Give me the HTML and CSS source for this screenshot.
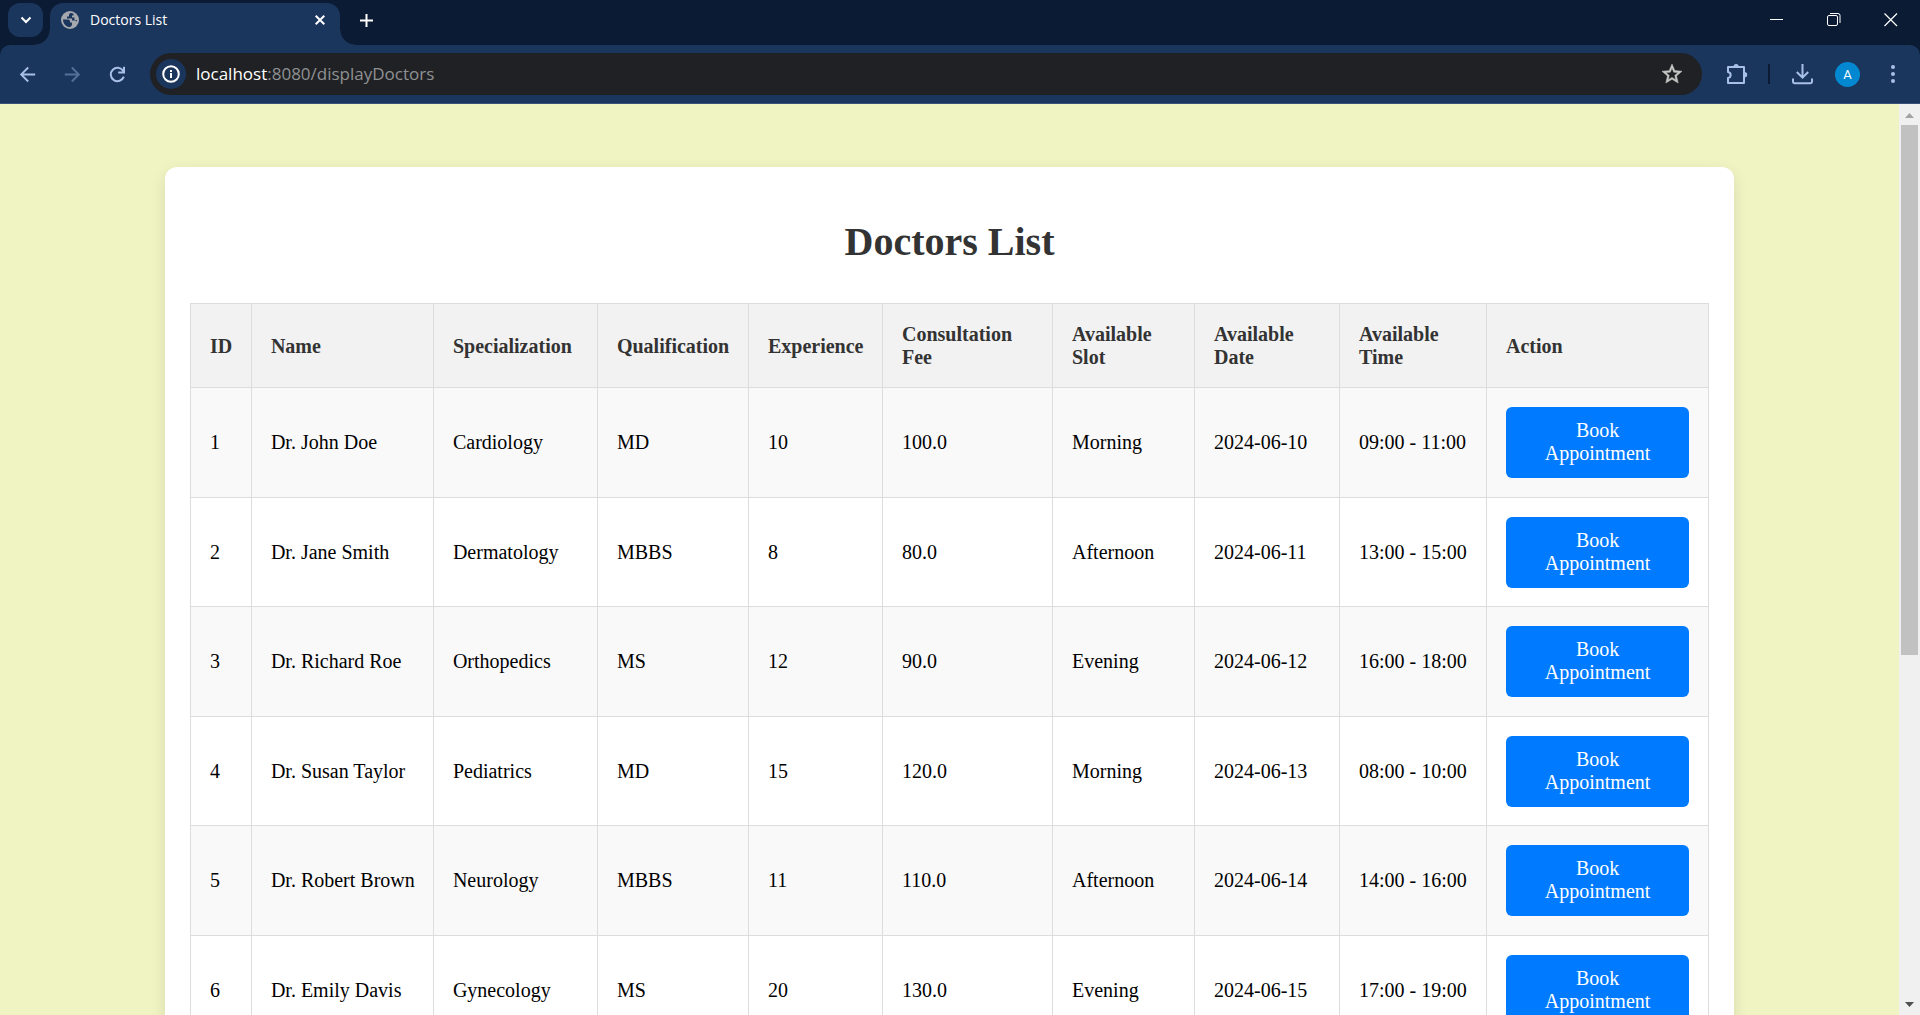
FILE: index.html
```html
<!DOCTYPE html>
<html lang="en">
<head>
<meta charset="utf-8">
<title>Doctors List</title>
<link rel="stylesheet" href="styles.css">
</head>
<body>
<div class="browser">
  <header class="tabstrip">
    <button class="tab-search" aria-label="Search tabs">
      <svg width="12" height="8" viewBox="0 0 12 8" fill="none" stroke="#fff" stroke-width="2"><path d="M1.500 1.500 6 6l4.500-4.500"/></svg>
    </button>
    <div class="tab">
      <svg width="18" height="18" viewBox="0 0 18 18"><circle cx="9" cy="9" r="9" fill="#a5a8ad"/><path fill="#1b365d" d="M2 8.500h5c1.200 0 2 .8 2 2v1h2v2.200c0 .8-.8 1.300-2 2.400-4 0-7-3.600-7-7.600zM9.500 2c-1 .4-1.500 1.200-1.500 2.300V5.500H6V7.500h5V9.500h3c.8 0 1.300.5 1.600 1.200.3-.6.400-1.100.400-1.700h-2.500V6.500H11V4.500h1.500V2.700C11.600 2.200 10.500 2 9.500 2z"/></svg>
      <span class="tab-title">Doctors List</span>
      <button class="tab-close" aria-label="Close tab">
        <svg width="10" height="10" viewBox="0 0 10 10" stroke="#fff" stroke-width="2"><path d="m.7.700 8.600 8.600M9.300.700.700 9.300"/></svg>
      </button>
    </div>
    <button class="new-tab" aria-label="New tab">
      <svg width="13" height="13" viewBox="0 0 13 13" stroke="#fff" stroke-width="2"><path d="M6.500 0v13M0 6.500h13"/></svg>
    </button>
    <div class="window-controls">
      <button aria-label="Minimize"><svg width="14" height="14" viewBox="0 0 14 14" stroke="#fff"><path d="M0 6.500h13"/></svg></button>
      <button aria-label="Restore"><svg width="14" height="14" viewBox="0 0 14 14" fill="none" stroke="#fff"><rect x=".5" y="2.500" width="10" height="10" rx="1.500"/><path d="M3 .5h8a2 2 0 0 1 2 2V10"/></svg></button>
      <button aria-label="Close"><svg width="14" height="14" viewBox="0 0 14 14" stroke="#fff" stroke-width="1.200"><path d="m.5.500 12.500 12.500M13 .500.500 13"/></svg></button>
    </div>
  </header>
  <div class="toolbar-backdrop">
  <nav class="toolbar">
    <button class="tool" aria-label="Back"><svg width="23" height="23" viewBox="0 0 24 24" fill="#a8c0e8"><path d="M20 11H7.830l5.590-5.590L12 4l-8 8 8 8 1.410-1.410L7.830 13H20z"/></svg></button>
    <button class="tool" aria-label="Forward"><svg width="23" height="23" viewBox="0 0 24 24" fill="#546f99"><path d="M4 11h12.170l-5.590-5.590L12 4l8 8-8 8-1.410-1.410L16.170 13H4z"/></svg></button>
    <button class="tool" aria-label="Reload"><svg width="17" height="17" viewBox="0 0 17 17" fill="none" stroke="#a8c0e8" stroke-width="2"><path d="M14.800 10.600A6.700 6.700 0 1 1 14.200 5M15 .7v5.800H9.200"/></svg></button>
    <div class="address">
      <button class="site-info" aria-label="View site information"><svg width="18" height="18" viewBox="0 0 18 18"><circle cx="9" cy="9" r="7.800" fill="none" stroke="#fff" stroke-width="2"/><path fill="#fff" d="M8 8h2v5H8zM8 5h2v2H8z"/></svg></button>
      <div class="url" role="textbox" aria-label="Address" tabindex="0"><span class="host">localhost</span>:8080/displayDoctors</div>
      <button class="bookmark" aria-label="Bookmark this tab"><svg width="24" height="24" viewBox="0 0 24 24" fill="#c7c7c7" stroke="#c7c7c7" stroke-width=".5"><path d="m22 9.240-7.190-.62L12 2 9.190 8.630 2 9.240l5.460 4.730L5.820 21 12 17.270 18.180 21l-1.630-7.030zM12 15.400l-3.760 2.270 1-4.280-3.320-2.880 4.380-.38L12 6.100l1.710 4.040 4.380.38-3.320 2.880 1 4.280z"/></svg></button>
    </div>
    <button class="tool" aria-label="Extensions"><svg width="22" height="22" viewBox="0 0 22 22"><path fill="none" stroke="#a8c0e8" stroke-width="2" stroke-linejoin="round" d="M2 4h16v16H2v-5c3.500-.5 3.500-5.500 0-6z"/><path fill="#a8c0e8" d="M7.500 3.500a2.600 2.600 0 0 1 5.200 0zM18.500 9a2.700 2.700 0 0 1 0 5.400z"/></svg></button>
    <span class="divider"></span>
    <button class="tool" aria-label="Downloads"><svg width="21" height="21" viewBox="0 0 21 21" fill="none" stroke="#a8c0e8" stroke-width="2"><path d="M10.500 0v13.500M4.800 8l5.700 5.700L16.200 8M1 14.500v3.300c0 .9.500 1.400 1.400 1.400h16.200c.9 0 1.400-.5 1.400-1.400v-3.300"/></svg></button>
    <button class="tool" aria-label="Profile"><span class="avatar">A</span></button>
    <button class="tool" aria-label="Menu"><svg width="4" height="18" viewBox="0 0 4 18" fill="#a8c0e8"><circle cx="2" cy="2" r="2"/><circle cx="2" cy="9" r="2"/><circle cx="2" cy="16" r="2"/></svg></button>
  </nav>
  </div>
  <div class="viewport">
    <main class="page">
      <section class="card">
        <h1>Doctors List</h1>
        <table>
          <colgroup><col class="c-id"><col class="c-name"><col class="c-spec"><col class="c-qual"><col class="c-exp"><col class="c-fee"><col class="c-slot"><col class="c-date"><col class="c-time"><col class="c-action"></colgroup>
          <thead>
            <tr><th>ID</th><th>Name</th><th>Specialization</th><th>Qualification</th><th>Experience</th><th>Consultation Fee</th><th>Available Slot</th><th>Available Date</th><th>Available Time</th><th>Action</th></tr>
          </thead>
          <tbody>
            <tr><td>1</td><td>Dr. John Doe</td><td>Cardiology</td><td>MD</td><td>10</td><td>100.0</td><td>Morning</td><td>2024-06-10</td><td>09:00 - 11:00</td><td><a class="book" href="#">Book Appointment</a></td></tr>
            <tr><td>2</td><td>Dr. Jane Smith</td><td>Dermatology</td><td>MBBS</td><td>8</td><td>80.0</td><td>Afternoon</td><td>2024-06-11</td><td>13:00 - 15:00</td><td><a class="book" href="#">Book Appointment</a></td></tr>
            <tr><td>3</td><td>Dr. Richard Roe</td><td>Orthopedics</td><td>MS</td><td>12</td><td>90.0</td><td>Evening</td><td>2024-06-12</td><td>16:00 - 18:00</td><td><a class="book" href="#">Book Appointment</a></td></tr>
            <tr><td>4</td><td>Dr. Susan Taylor</td><td>Pediatrics</td><td>MD</td><td>15</td><td>120.0</td><td>Morning</td><td>2024-06-13</td><td>08:00 - 10:00</td><td><a class="book" href="#">Book Appointment</a></td></tr>
            <tr><td>5</td><td>Dr. Robert Brown</td><td>Neurology</td><td>MBBS</td><td>11</td><td>110.0</td><td>Afternoon</td><td>2024-06-14</td><td>14:00 - 16:00</td><td><a class="book" href="#">Book Appointment</a></td></tr>
            <tr><td>6</td><td>Dr. Emily Davis</td><td>Gynecology</td><td>MS</td><td>20</td><td>130.0</td><td>Evening</td><td>2024-06-15</td><td>17:00 - 19:00</td><td><a class="book" href="#">Book Appointment</a></td></tr>
          </tbody>
        </table>
      </section>
    </main>
    <div class="scrollbar" aria-hidden="true">
      <svg class="arrow" width="21" height="21" viewBox="0 0 21 21" fill="#a3a3a3"><path d="M6 14h9l-4.500-5z"/></svg>
      <div class="track"><div class="thumb"></div></div>
      <svg class="arrow" width="21" height="21" viewBox="0 0 21 21" fill="#505050"><path d="M6 8h9l-4.500 5z"/></svg>
    </div>
  </div>
</div>
</body>
</html>
```
FILE: styles.css
```css
* { box-sizing: border-box; }

body {
  margin: 0;
  font-family: "Liberation Serif", "Times New Roman", serif;
  font-size: 20px;
  line-height: 23px;
  color: #000;
}

button {
  display: flex;
  align-items: center;
  justify-content: center;
  padding: 0;
  border: 0;
  background: none;
}

svg { display: block; flex: none; }

.browser {
  display: flex;
  flex-direction: column;
  height: 100vh;
  overflow: hidden;
}

/* Tab strip */
.tabstrip {
  display: flex;
  height: 45px;
  padding: 3px 0 0 8px;
  background: #0a1b33;
  font-family: "Open Sans", sans-serif;
}

.tab-search {
  width: 35px;
  height: 34px;
  border-radius: 12px;
  background: #1b365d;
}

.tab {
  position: relative;
  display: flex;
  align-items: center;
  width: 290px;
  margin-left: 7px;
  padding: 0 10px 8px 11px;
  border-radius: 13px 13px 0 0;
  background: #1b365d;
}

.tab::before,
.tab::after {
  content: "";
  position: absolute;
  bottom: 0;
  width: 15px;
  height: 15px;
}

.tab::before {
  right: 100%;
  background: radial-gradient(circle at 0 0, transparent 14px, #1b365d 15px);
}

.tab::after {
  left: 100%;
  background: radial-gradient(circle at 100% 0, transparent 14px, #1b365d 15px);
}

.tab-title {
  flex: 1;
  margin-left: 11px;
  font-size: 14px;
  line-height: 20px;
  color: #fff;
}

.tab-close { width: 20px; height: 20px; }

.new-tab {
  width: 34px;
  height: 34px;
  margin-left: 9px;
}

.window-controls {
  display: flex;
  margin-left: auto;
  padding-right: 1px;
}

.window-controls button {
  width: 57px;
  height: 34px;
}

/* Toolbar */
.toolbar-backdrop { background: #0a1b33; }

.toolbar {
  display: flex;
  align-items: center;
  height: 59px;
  padding: 0 5px;
  border-bottom: 1px solid #3a5077;
  border-radius: 10px 10px 0 0;
  background: #1b365d;
  font-family: "Open Sans", sans-serif;
}

.tool {
  width: 45px;
  height: 42px;
}

.address {
  display: flex;
  flex: 1;
  align-items: center;
  height: 42px;
  margin: 0 12px 0 10px;
  padding: 0 18px 0 6px;
  border-radius: 21px;
  background: #202124;
}

.site-info {
  width: 30px;
  height: 30px;
  border-radius: 50%;
  background: #1b365d;
}

.url {
  flex: 1;
  margin-left: 10px;
  font-size: 17px;
  line-height: 24px;
  color: #8f9193;
}

.host { color: #fff; }

.divider {
  width: 2px;
  height: 20px;
  margin: 0 10px 0 9px;
  background: #0a1b33;
}

.avatar {
  width: 25px;
  height: 25px;
  border-radius: 50%;
  background: #0288d1;
  font: 13px/25px Roboto, sans-serif;
  color: #fff;
}

/* Page */
.viewport {
  display: flex;
  flex: 1;
  min-height: 0;
}

.page {
  flex: 1;
  overflow: hidden;
  background: #f0f4c3;
}

.card {
  box-sizing: content-box;
  width: 80%;
  margin: 63px auto;
  padding: 25px;
  border-radius: 12px;
  background: #fff;
  box-shadow: 0 5px 15px rgba(0, 0, 0, .1);
}

h1 {
  margin: 27px 0 38px;
  font-size: 40px;
  line-height: 46px;
  text-align: center;
  color: #333;
}

table {
  width: 100%;
  table-layout: fixed;
  border-collapse: collapse;
}

.c-id { width: 61px; }
.c-name { width: 182px; }
.c-spec { width: 164px; }
.c-qual { width: 151px; }
.c-exp { width: 134px; }
.c-fee { width: 170px; }
.c-slot { width: 142px; }
.c-date { width: 145px; }
.c-time { width: 147px; }
.c-action { width: 222px; }

th,
td {
  padding: 19px;
  border: 1px solid #ddd;
  text-align: left;
}

th {
  padding-bottom: 18px;
  background: #f2f2f2;
  color: #333;
}

td { white-space: nowrap; }

tbody tr:nth-child(odd) { background: #f9f9f9; }
tbody tr:nth-child(even) td { padding-bottom: 18px; }

.book {
  display: block;
  padding: 12px 25px 13px;
  border-radius: 6px;
  background: #007bff;
  color: #fff;
  text-align: center;
  text-decoration: none;
  white-space: normal;
}

/* Scrollbar */
.scrollbar {
  display: flex;
  flex-direction: column;
  width: 21px;
  background: #f0f0f0;
}

.track {
  flex: 1;
  padding: 0 2px;
}

.thumb {
  height: 61%;
  background: #c1c1c1;
}
```
